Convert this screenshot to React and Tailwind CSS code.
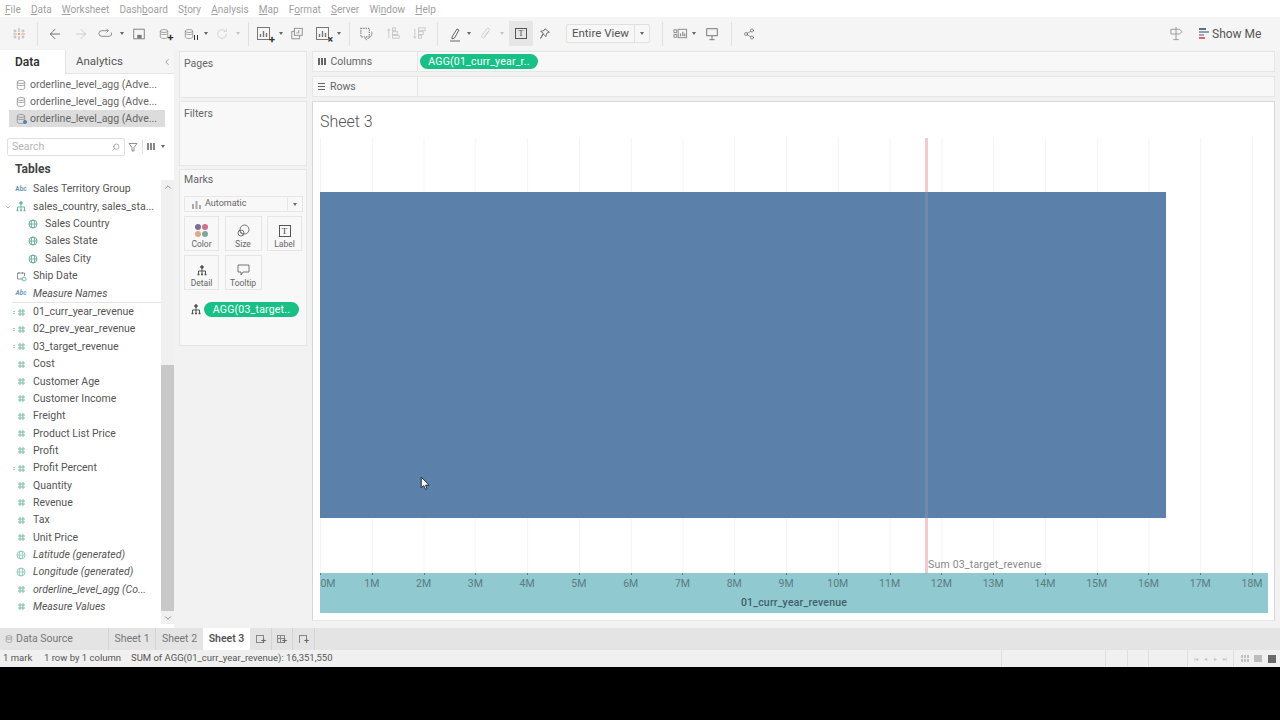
import React from "react";
import { ArrowLeft, ArrowRight, ChevronDown, ChevronLeft, ChevronUp, Search, Share2 } from "lucide-react";

const Svg = ({ size = 16, className = "", children }) => (
  <svg width={size} height={size} viewBox="0 0 16 16" fill="none" stroke="currentColor" strokeWidth="1" className={className}>
    {children}
  </svg>
);

const Caret = ({ light }) => (
  <span className={`w-0 h-0 border-x-[2px] border-x-transparent border-t-[3px] ${light ? "border-t-[#c4c4c4]" : "border-t-[#666]"}`} />
);

const Sep = () => <div className="w-px h-[24px] bg-[#e0e0e0] shrink-0" />;

const Slot = ({ w, children, className = "" }) => (
  <div className={`${w} h-full shrink-0 flex items-center justify-center ${className}`}>{children}</div>
);

const LogoIcon = () => (
  <svg width="14" height="14" viewBox="0 0 14 14">
    <g stroke="#d9a0a8" strokeWidth="1.1">
      <path d="M7 1v4M7 9v4M1 7h4M9 7h4" />
    </g>
    <g stroke="#a9b6c4" strokeWidth="0.9">
      <path d="M3 2.500v3M1.500 4h3M11 2.500v3M9.500 4h3M3 8.500v3M1.500 10h3M11 8.500v3M9.500 10h3" />
    </g>
    <circle cx="7" cy="7" r="1.2" fill="#e3a67f" />
  </svg>
);

const DbIcon = ({ className = "" }) => (
  <Svg size={12} className={className}>
    <ellipse cx="8" cy="4" rx="5" ry="2" />
    <path d="M3 4v8c0 1 2 2 5 2s5-1 5-2V4" />
    <path d="M3 7.500c1 1 2.500 1.200 5 1.200s4-.3 5-1.200" />
  </Svg>
);

const BarsIcon = ({ badge }) => (
  <span className="relative flex">
    <Svg size={16} className="text-[#777]">
      <rect x="1.500" y="1.500" width="12" height="12" />
      <path d="M4.500 11V8M7.500 11V5M10.500 11V7" strokeWidth="1.400" />
    </Svg>
    {badge === "plus" && <span className="absolute right-[-3px] bottom-[-3px] text-[11px] leading-[10px] font-bold text-[#333]">+</span>}
    {badge === "x" && <span className="absolute right-[-2px] bottom-[-2px] text-[10px] leading-[9px] font-bold text-[#333]">×</span>}
  </span>
);

function Toolbar() {
  return (
    <div className="h-[33px] bg-[#f5f5f5] flex items-center text-[#666] shrink-0">
      <Slot w="w-[37px]"><LogoIcon /></Slot>
      <Sep />
      <Slot w="w-[34px]"><ArrowLeft size={16} strokeWidth={1.2} className="text-[#555]" /></Slot>
      <Slot w="w-[18px]"><ArrowRight size={16} strokeWidth={1.2} className="text-[#c4c4c4]" /></Slot>
      <Slot w="w-[30px]">
        <Svg size={15} className="text-[#888]">
          <path d="M11 5H4a2.500 2.500 0 0 0 0 6h8a2.500 2.500 0 0 0 2-4" />
          <path d="M9 3l2 2-2 2" />
        </Svg>
      </Slot>
      <Slot w="w-[4px]"><Caret /></Slot>
      <Slot w="w-[30px]">
        <Svg size={14} className="text-[#777]">
          <rect x="2" y="2.500" width="12" height="11" />
          <rect x="6" y="9" width="5" height="4" fill="currentColor" stroke="none" />
        </Svg>
      </Slot>
      <Slot w="w-[22px]">
        <span className="relative flex mr-[3px]">
          <DbIcon className="text-[#888]" />
          <span className="absolute right-[-4px] bottom-[-2px] text-[11px] leading-[9px] font-bold text-[#333]">+</span>
        </span>
      </Slot>
      <Slot w="w-[28px]">
        <span className="relative flex mr-[3px]">
          <DbIcon className="text-[#888]" />
          <span className="absolute right-[-3px] bottom-[0px] w-[4px] h-[5px] border-x border-[#333]" />
        </span>
      </Slot>
      <Slot w="w-[4px]"><Caret /></Slot>
      <Slot w="w-[28px]">
        <Svg size={14} className="text-[#cfcfcf]">
          <path d="M13 8a5 5 0 1 1-1.500-3.500M13 2v3h-3" />
        </Svg>
      </Slot>
      <Slot w="w-[4px]"><Caret light /></Slot>
      <div className="w-[8px] shrink-0" />
      <Sep />
      <Slot w="w-[30px]"><BarsIcon badge="plus" /></Slot>
      <Slot w="w-[4px]"><Caret /></Slot>
      <Slot w="w-[28px]">
        <Svg size={14} className="text-[#888]">
          <rect x="5" y="1.500" width="9" height="8" />
          <path d="M5 5H2v8.500h9V10M8 7.500V6M10 7.500V3.500" />
        </Svg>
      </Slot>
      <Slot w="w-[24px]"><BarsIcon badge="x" /></Slot>
      <Slot w="w-[8px]"><Caret /></Slot>
      <div className="w-[6px] shrink-0" />
      <Sep />
      <Slot w="w-[32px]">
        <Svg size={15} className="text-[#888]">
          <path d="M2 2.500h9v9H2z" strokeDasharray="1.500 1" strokeWidth="1.300" />
          <path d="M13.500 6c1 3-1 6.500-4.500 7.500" />
          <path d="M8 11.500l-1.500 2 2 1.500" />
        </Svg>
      </Slot>
      <Slot w="w-[22px]">
        <Svg size={15} className="text-[#c8c8c8]">
          <path d="M3 13V3M1.500 5L3 3l1.500 2" />
          <rect x="7" y="2" width="3" height="3" />
          <rect x="7" y="6" width="5" height="3" />
          <rect x="7" y="10" width="7" height="3" />
        </Svg>
      </Slot>
      <Slot w="w-[30px]">
        <Svg size={15} className="text-[#c8c8c8]">
          <path d="M3 3v10M1.500 11L3 13l1.500-2" />
          <rect x="7" y="2" width="7" height="3" />
          <rect x="7" y="6" width="5" height="3" />
          <rect x="7" y="10" width="3" height="3" />
        </Svg>
      </Slot>
      <div className="w-[3px] shrink-0" />
      <Sep />
      <div className="w-[7px] shrink-0" />
      <Slot w="w-[20px]">
        <Svg size={16} className="text-[#666]">
          <path d="M5 11L10 3l2 1-4.500 8L5 13z" />
          <path d="M3 15h10" />
        </Svg>
      </Slot>
      <Slot w="w-[8px]"><Caret /></Slot>
      <Slot w="w-[26px]">
        <Svg size={14} className="text-[#c8c8c8]">
          <path d="M11 5l-5 7a2 2 0 0 1-3-2l6-8a1.500 1.500 0 0 1 2.500 2L6 11" />
        </Svg>
      </Slot>
      <Slot w="w-[6px]"><Caret light /></Slot>
      <div className="w-[4px] shrink-0" />
      <div className="w-[24px] h-[25px] bg-[#e6e6e6] shrink-0 flex items-center justify-center">
        <span className="w-[12px] h-[11px] border border-[#555] flex items-center justify-center text-[8px] leading-none text-[#444] font-['Liberation_Serif',serif]">T</span>
      </div>
      <Slot w="w-[24px]">
        <Svg size={14}>
          <path d="M8 2l5 4-3 1-1 4-3-3-3 5 3-6-3-2 4-1z" />
        </Svg>
      </Slot>
      <div className="w-[9px] shrink-0" />
      <div className="w-[84px] h-[19px] shrink-0 border border-[#e0e0e0] rounded-[2px] bg-[#f7f7f7] flex items-center">
        <span className="flex-1 text-[11.5px] text-[#555] text-center">Entire View</span>
        <span className="w-[15px] h-full border-l border-[#e0e0e0] flex items-center justify-center"><Caret /></span>
      </div>
      <div className="w-[12px] shrink-0" />
      <Sep />
      <div className="w-[7px] shrink-0" />
      <Slot w="w-[20px]">
        <Svg size={15} className="text-[#888]">
          <path d="M1 4h3v3H1zM1 9h3v3H1z" />
          <rect x="5.500" y="3.500" width="9" height="9" />
          <path d="M8 11V8M10.500 11V6M12.500 11V8" strokeWidth="1.300" />
        </Svg>
      </Slot>
      <Slot w="w-[8px]"><Caret /></Slot>
      <Slot w="w-[28px]">
        <Svg size={14} className="text-[#666]">
          <rect x="2" y="2" width="12" height="8" />
          <path d="M8 10v4M5 14.500h6" />
        </Svg>
      </Slot>
      <div className="w-[5px] shrink-0" />
      <Sep />
      <Slot w="w-[34px]"><Share2 size={12} strokeWidth={1.2} className="text-[#555]" /></Slot>
      <div className="flex-1" />
      <Slot w="w-[20px]">
        <Svg size={15} className="text-[#999]">
          <path d="M7.500 1v13M4.500 14.500h6M2 3.500h9l3 2.500-3 2.500H2z" />
        </Svg>
      </Slot>
      <div className="w-[13px] shrink-0" />
      <div className="flex items-center gap-[3px] w-[81px] shrink-0">
        <span className="flex flex-col gap-px">
          <span className="w-[7px] h-[2px] bg-[#66707c]" />
          <span className="w-[10px] h-[2px] bg-[#7fa7b7]" />
          <span className="w-[5px] h-[2px] bg-[#c79aa5]" />
          <span className="w-[6px] h-[2px] bg-[#d9667f]" />
        </span>
        <span className="text-[12px] text-[#555]">Show Me</span>
      </div>
    </div>
  );
}

const MENU = [
  ["", "F", "ile"], ["", "D", "ata"], ["", "W", "orksheet"], ["Dash", "b", "oard"], ["S", "t", "ory"], ["", "A", "nalysis"],
  ["", "M", "ap"], ["F", "o", "rmat"], ["", "S", "erver"], ["Wi", "n", "dow"], ["", "H", "elp"],
];

function MenuBar() {
  return (
    <div className="h-[17px] bg-white flex items-center gap-[10.2px] pl-[5px] pt-[1px] text-[10px] text-[#a0a0a0] shrink-0">
      {MENU.map(([a, b, c]) => (
        <span key={a + b + c}>
          {a}
          <span className="underline">{b}</span>
          {c}
        </span>
      ))}
    </div>
  );
}

const Hash = ({ calc }) => (
  <span className="relative flex items-center justify-center w-[9px] h-[9px]">
    {calc && <span className="absolute left-[-4px] top-[3px] w-[2px] h-[3px] border-y border-[#9ccfbe]" />}
    <svg width="9" height="9" viewBox="0 0 9 9" stroke="#6fb8a3" strokeWidth="0.9">
      <path d="M3 1v7M6 1v7M1 3h7M1 6h7" />
    </svg>
  </span>
);

const Abc = () => <span className="text-[6.5px] leading-none text-[#5f94b3] font-semibold">Abc</span>;

const Globe = ({ light }) => (
  <svg width="10" height="10" viewBox="0 0 10 10" fill="none" stroke={light ? "#8accb7" : "#5cae96"} strokeWidth="0.9">
    <circle cx="5" cy="5" r="4" />
    <ellipse cx="5" cy="5" rx="1.800" ry="4" />
    <path d="M1 5h8" />
  </svg>
);

const Hier = ({ color = "#4fa58c" }) => (
  <svg width="10" height="11" viewBox="0 0 10 11" fill="none" stroke={color} strokeWidth="1">
    <circle cx="5" cy="2" r="1.300" fill={color} />
    <path d="M5 3v3M1.500 9V6h7v3M5 6v3" />
    <path d="M0.500 9.500h2M4 9.500h2M7.500 9.500h2" strokeWidth="1.400" />
  </svg>
);

const Cal = () => (
  <svg width="11" height="11" viewBox="0 0 11 11" fill="none" stroke="#7d8b98" strokeWidth="0.9">
    <path d="M7 8H1.500V2h7v3M3 1v2M6.500 1v2" />
    <circle cx="8" cy="8" r="2" stroke="#5fb09a" />
  </svg>
);

const FIELDS = [
  { n: "Sales Territory Group", i: <Abc /> },
  { n: "sales_country, sales_sta...", i: <Hier color="#6fb8a3" />, open: true },
  { n: "Sales Country", i: <Globe />, sub: true },
  { n: "Sales State", i: <Globe />, sub: true },
  { n: "Sales City", i: <Globe />, sub: true },
  { n: "Ship Date", i: <Cal /> },
  { n: "Measure Names", i: <Abc />, it: true },
  { line: true },
  { n: "01_curr_year_revenue", i: <Hash calc /> },
  { n: "02_prev_year_revenue", i: <Hash calc /> },
  { n: "03_target_revenue", i: <Hash calc /> },
  { n: "Cost", i: <Hash /> },
  { n: "Customer Age", i: <Hash /> },
  { n: "Customer Income", i: <Hash /> },
  { n: "Freight", i: <Hash /> },
  { n: "Product List Price", i: <Hash /> },
  { n: "Profit", i: <Hash /> },
  { n: "Profit Percent", i: <Hash calc /> },
  { n: "Quantity", i: <Hash /> },
  { n: "Revenue", i: <Hash /> },
  { n: "Tax", i: <Hash /> },
  { n: "Unit Price", i: <Hash /> },
  { n: "Latitude (generated)", i: <Globe light />, it: true },
  { n: "Longitude (generated)", i: <Globe light />, it: true },
  { n: "orderline_level_agg (Co...", i: <Hash />, it: true },
  { n: "Measure Values", i: <Hash />, it: true },
];

function FieldRow({ f }) {
  if (f.line) return <div className="h-[1.3px] ml-[12px] border-b border-[#e4e4e4]" />;
  return (
    <div className={`h-[17.35px] flex items-center text-[10.5px] text-[#555] whitespace-nowrap ${f.it ? "italic" : ""}`}>
      <span className="w-[15px] flex justify-center">
        {f.open && <ChevronDown size={8} strokeWidth={1.5} className="text-[#777]" />}
      </span>
      {f.sub && <span className="w-[12px]" />}
      <span className="w-[12px] flex justify-center">{f.i}</span>
      <span className="ml-[6px]">{f.n}</span>
    </div>
  );
}

function DataPane() {
  return (
    <div className="w-[174px] h-full bg-white flex flex-col shrink-0">
      <div className="h-[24px] flex shrink-0">
        <div className="w-[65px] flex items-center pl-[15px] text-[12px] font-semibold text-[#333]">Data</div>
        <div className="flex-1 bg-[#f5f5f5] border-l border-b border-[#e4e4e4] flex items-center text-[11.5px] text-[#555] pl-[10px]">
          <span className="flex-1">Analytics</span>
          <ChevronLeft size={10} strokeWidth={1.5} className="mr-[2px] text-[#666]" />
        </div>
      </div>
      <div className="flex flex-col pt-[3px] pl-[9px] pr-[9px] text-[10.5px] text-[#666] shrink-0">
        {[0, 1, 2].map((i) => (
          <div key={i} className={`h-[16.7px] flex items-center gap-[3px] pl-[6px] whitespace-nowrap ${i === 2 ? "bg-[#dcdcdc]" : ""}`}>
            <span className="relative flex">
              <DbIcon className="text-[#8a8a8a]" />
              {i === 2 && <span className="absolute right-[0px] bottom-[1px] w-[4px] h-[4px] rounded-full bg-[#4f86a8]" />}
            </span>
            <span>orderline_level_agg (Adve...</span>
          </div>
        ))}
      </div>
      <div className="h-[28px] flex items-center pl-[7px] shrink-0 mt-[5.9px]">
        <div className="w-[118px] h-[18px] border border-[#e0e0e0] rounded-[2px] flex items-center pl-[4px] pr-[4px] text-[10.5px] text-[#b5b5b5]">
          <span className="flex-1">Search</span>
          <Search size={8} strokeWidth={1.5} className="text-[#666] -scale-x-100" />
        </div>
        <svg width="10" height="10" viewBox="0 0 10 10" fill="none" stroke="#7b8794" strokeWidth="0.9" className="ml-[3px]">
          <path d="M1 1.500h8L6 5.500V9H4V5.500z" />
        </svg>
        <span className="w-px h-[14px] bg-[#e0e0e0] ml-[4px]" />
        <span className="ml-[4px] flex gap-px">
          <span className="w-[2px] h-[7px] bg-[#888]" />
          <span className="w-[2px] h-[7px] bg-[#888]" />
          <span className="w-[2px] h-[7px] bg-[#888]" />
        </span>
        <span className="ml-[6px] flex"><Caret /></span>
      </div>
      <div className="h-[16px] pl-[15px] flex items-center text-[12px] font-bold text-[#444] shrink-0">Tables</div>
      <div className="flex-1 flex min-h-0">
        <div className="flex-1 min-w-0 pt-[3.7px]">
          {FIELDS.map((f, i) => (
            <FieldRow key={i} f={f} />
          ))}
        </div>
        <div className="w-[13px] flex flex-col items-center shrink-0 mb-[4px]">
          <div className="h-[3px] w-full" />
          <div className="flex-1 w-full bg-[#f0f0f0] flex flex-col items-center">
            <ChevronUp size={10} strokeWidth={1.5} className="mt-[2px] text-[#555]" />
            <div className="h-[173px]" />
            <div className="w-full h-[246px] bg-[#c8c8c8]" />
            <ChevronDown size={10} strokeWidth={1.5} className="mt-[2px] text-[#555]" />
          </div>
        </div>
      </div>
    </div>
  );
}

function MarkBtn({ w, label, children }) {
  return (
    <div className={`${w} h-[35px] border border-[#e6e6e6] flex flex-col items-center justify-end pb-[1px] gap-[2px] text-[8.5px] leading-[10px] text-[#666]`}>
      {children}
      <span>{label}</span>
    </div>
  );
}

function Cards() {
  return (
    <div className="w-[128px] ml-[5px] h-full flex flex-col shrink-0 pt-[1px]">
      <div className="h-[47px] bg-[#f8f8f8] border border-[#e6e6e6] pl-[4px] pt-[4px] text-[10.5px] text-[#666] shrink-0">Pages</div>
      <div className="h-[65px] mt-[3px] bg-[#f8f8f8] border border-[#e6e6e6] pl-[4px] pt-[4px] text-[10.5px] text-[#666] shrink-0">Filters</div>
      <div className="h-[177px] mt-[3px] bg-[#f8f8f8] border border-[#e6e6e6] px-[4px] pt-[3px] shrink-0 flex flex-col">
        <div className="text-[10.5px] leading-[14px] text-[#666]">Marks</div>
        <div className="h-[16px] mt-[9px] w-[119px] border border-[#e6e6e6] flex items-center text-[9px] text-[#666]">
          <svg width="11" height="9" viewBox="0 0 11 9" fill="#a9a9a9" className="ml-[6px] mr-[3px]">
            <path d="M1 4h2v5H1zM4.500 1h2v8h-2zM8 5h2v4H8z" />
          </svg>
          <span className="flex-1">Automatic</span>
          <span className="w-[15px] h-full border-l border-[#e6e6e6] flex items-center justify-center"><Caret /></span>
        </div>
        <div className="flex gap-[5.5px] mt-[4px]">
          <MarkBtn w="w-[35px]" label="Color">
            <span className="grid grid-cols-2 gap-[1px]">
              <span className="w-[6px] h-[6px] rounded-full bg-[#7d6f8f]" />
              <span className="w-[6px] h-[6px] rounded-full bg-[#d4708c]" />
              <span className="w-[6px] h-[6px] rounded-full bg-[#e0a88a]" />
              <span className="w-[6px] h-[6px] rounded-full bg-[#7ba89e]" />
            </span>
          </MarkBtn>
          <MarkBtn w="w-[37px]" label="Size">
            <svg width="13" height="13" viewBox="0 0 13 13" fill="none" stroke="#666" strokeWidth="0.9">
              <circle cx="7.500" cy="5.500" r="4.500" />
              <circle cx="4" cy="9" r="3" />
              <path d="M2.500 7.500l3 3" />
            </svg>
          </MarkBtn>
          <MarkBtn w="w-[35px]" label="Label">
            <span className="w-[12px] h-[12px] border border-[#555] flex items-center justify-center text-[9px] leading-none text-[#444] font-['Liberation_Serif',serif]">T</span>
          </MarkBtn>
        </div>
        <div className="flex gap-[5.5px] mt-[4px]">
          <MarkBtn w="w-[35px]" label="Detail"><Hier color="#555" /></MarkBtn>
          <MarkBtn w="w-[37px]" label="Tooltip">
            <svg width="13" height="12" viewBox="0 0 13 12" fill="none" stroke="#666" strokeWidth="0.9">
              <path d="M1 1h11v7H6l-2 3V8H1z" />
            </svg>
          </MarkBtn>
        </div>
        <div className="flex items-center mt-[12px] pl-[7px]">
          <Hier color="#555" />
          <div className="ml-[3px] w-[95px] h-[15px] rounded-full bg-[#17c186] text-white text-[10.5px] tracking-[0.2px] leading-[15px] text-center whitespace-nowrap">AGG(03_target..</div>
        </div>
      </div>
    </div>
  );
}

function Shelf({ label, icon, children }) {
  return (
    <div className="h-[21px] bg-[#f8f8f8] border border-[#e6e6e6] flex items-center shrink-0">
      <div className="w-[105px] h-full border-r border-[#e6e6e6] flex items-center pl-[5px] gap-[5px] text-[10.5px] text-[#666]">
        {icon}
        <span>{label}</span>
      </div>
      <div className="pl-[2px] flex items-center">{children}</div>
    </div>
  );
}

const TICK_STEP = 51.78;
const TICKS = Array.from({ length: 19 }, (_, i) => i);

function Chart() {
  return (
    <div className="relative w-[948px] h-[475px] ml-[7px]">
      <svg width="948" height="435" className="block">
        {TICKS.map((i) => (
          <line key={i} x1={i * TICK_STEP + 0.5} x2={i * TICK_STEP + 0.5} y1="0" y2="435" stroke="#f4f4f4" />
        ))}
        <rect x="0" y="54" width="846" height="326" fill="#5b80a9" />
        <rect x="605" y="0" width="3" height="435" fill="#f3c9cc" />
        <rect x="605" y="54" width="3" height="326" fill="#7389ac" />
      </svg>
      <span className="absolute left-[608px] top-[420px] text-[10.5px] tracking-[0.2px] leading-[13px] text-[#888]">Sum 03_target_revenue</span>
      <div className="relative h-[40px] bg-[#90c9d0] flex items-end justify-center pb-[4px]">
        {TICKS.map((i) => (
          <React.Fragment key={i}>
            <span className="absolute top-0 w-px h-[2px] bg-[#5c7d84]" style={{ left: i * TICK_STEP }} />
            <span className="absolute top-[4px] text-[10.5px] leading-[13px] text-[#5a7c85] -translate-x-1/2" style={{ left: i === 0 ? 8 : i * TICK_STEP }}>
              {i}M
            </span>
          </React.Fragment>
        ))}
        <span className="text-[10.5px] tracking-[0.2px] leading-[13px] font-medium text-[#41606a]">01_curr_year_revenue</span>
      </div>
    </div>
  );
}

function Viz() {
  return (
    <div className="w-[963px] ml-[5px] h-full flex flex-col shrink-0 pt-[1px] relative">
      <Shelf
        label="Columns"
        icon={
          <span className="flex gap-[1.5px]">
            <span className="w-[1.5px] h-[7px] bg-[#666]" />
            <span className="w-[1.5px] h-[7px] bg-[#666]" />
            <span className="w-[1.5px] h-[7px] bg-[#666]" />
          </span>
        }
      >
        <div className="w-[118px] h-[15px] rounded-full bg-[#17c186] text-white text-[10.5px] tracking-[0.2px] leading-[15px] text-center whitespace-nowrap">AGG(01_curr_year_r..</div>
      </Shelf>
      <div className="h-[4px] shrink-0" />
      <Shelf
        label="Rows"
        icon={
          <span className="flex flex-col gap-[1.5px]">
            <span className="w-[7px] h-[1.5px] bg-[#666]" />
            <span className="w-[7px] h-[1.5px] bg-[#666]" />
            <span className="w-[7px] h-[1.5px] bg-[#666]" />
          </span>
        }
      />
      <div className="h-[520px] mt-[4px] bg-white border border-[#d8d8d8] border-b-[#e8e8e8] shrink-0">
        <div className="pl-[7px] pt-[10px] h-[36px] text-[16px] leading-[20px] font-light text-[#555]">Sheet 3</div>
        <Chart />
      </div>
      {/* mouse pointer sits over the bar */}
      <svg width="11" height="15" viewBox="0 0 10 14" className="absolute left-[108px] top-[426px]">
        <path d="M1 1v10l2.500-2 1.500 3.500 1.500-.7L5 8.500h3.500z" fill="#fff" stroke="#1d2b3a" strokeWidth="0.9" />
      </svg>
    </div>
  );
}

function TabIcon({ w, children }) {
  return (
    <div className={`${w} h-full border-r border-[#d4d4d4] flex items-center justify-center shrink-0 relative`}>
      {children}
      <span className="absolute right-[5px] bottom-[5px] text-[9px] leading-[7px] text-[#666]">+</span>
    </div>
  );
}

function Tabs() {
  return (
    <div className="h-[22px] bg-[#e4e4e4] flex items-center text-[10.5px] text-[#777] shrink-0">
      <div className="w-[109px] h-full border-r border-[#d4d4d4] flex items-center gap-[1px] pl-[3px] shrink-0">
        <DbIcon className="text-[#888] scale-75" />
        <span>Data Source</span>
      </div>
      <div className="w-[47px] h-full border-r border-[#d4d4d4] flex items-center justify-center shrink-0">Sheet 1</div>
      <div className="w-[47px] h-full flex items-center justify-center shrink-0">Sheet 2</div>
      <div className="w-[47px] h-full bg-white flex items-center justify-center font-semibold text-[#555] shrink-0">Sheet 3</div>
      <TabIcon w="w-[22px]"><span className="w-[8px] h-[8px] border border-[#888] mr-[2px]" /></TabIcon>
      <TabIcon w="w-[21px]">
        <span className="w-[8px] h-[8px] border border-[#888] mr-[2px] grid grid-cols-2 grid-rows-2">
          <span className="border-r border-b border-[#888]" />
          <span className="border-b border-[#888]" />
          <span className="border-r border-[#888]" />
        </span>
      </TabIcon>
      <TabIcon w="w-[22px]"><span className="w-[8px] h-[8px] border-x border-t border-[#888] mr-[2px]" /></TabIcon>
    </div>
  );
}

function Status() {
  return (
    <div className="h-[17px] bg-[#f0f0f0] flex items-center text-[9.5px] text-[#555] shrink-0 whitespace-nowrap">
      <span className="w-[44px] pl-[3px] shrink-0">1 mark</span>
      <span className="w-[87px] shrink-0">1 row by 1 column</span>
      <span className="w-[870px] shrink-0">SUM of AGG(01_curr_year_revenue): 16,351,550</span>
      <span className="w-[104px] h-full border-l border-[#dedede] shrink-0" />
      <span className="w-[22px] h-full border-l border-[#dedede] shrink-0" />
      <span className="w-[21px] h-full border-l border-[#dedede] shrink-0" />
      <span className="w-[39px] h-full border-l border-[#dedede] shrink-0" />
      <span className="w-[46px] h-full border-l border-[#dedede] shrink-0 flex items-center justify-around px-[3px] text-[#c4c4c4]">
        <span className="text-[6px]">|◂</span>
        <span className="text-[6px]">◂</span>
        <span className="text-[6px]">▸</span>
        <span className="text-[6px]">▸|</span>
      </span>
      <span className="flex-1 h-full border-l border-[#dedede] flex items-center justify-around pl-[4px] pr-[1px]">
        <span className="w-[8px] h-[7px] grid grid-cols-3 gap-px">
          {[0, 1, 2, 3, 4, 5].map((i) => (
            <span key={i} className="bg-[#c0c0c0]" />
          ))}
        </span>
        <span className="w-[8px] h-[7px] bg-[#bdbdbd]" />
        <span className="w-[8px] h-[8px] bg-[#6a6a6a]" />
      </span>
    </div>
  );
}

export default function App() {
  return (
    <div className="w-[1280px] h-[720px] bg-black overflow-hidden flex flex-col font-['Roboto','Liberation_Sans',sans-serif]">
      <MenuBar />
      <Toolbar />
      <div className="h-[578px] bg-[#f2f2f2] flex shrink-0">
        <DataPane />
        <Cards />
        <Viz />
      </div>
      <Tabs />
      <Status />
    </div>
  );
}
